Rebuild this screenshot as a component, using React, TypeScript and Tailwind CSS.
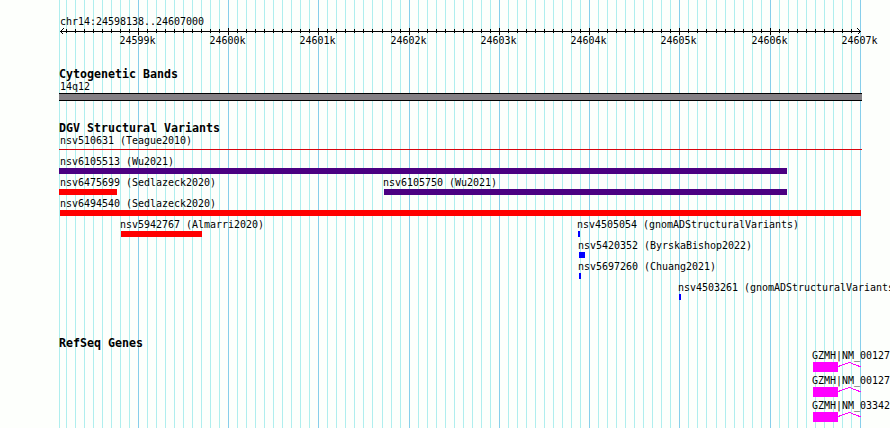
import React from 'react';

type Feature = { name: string; x: number; start: number; end: number; color: string };

const RED = 'bg-[#ff0000]';
const INDIGO = 'bg-[#4b0082]';
const BLUE = 'bg-[#0000ff]';

// One entry per packed row of the variants track
const variantRows: Feature[][] = [
  [{ name: 'nsv6105513 (Wu2021)', x: 60, start: 59, end: 787, color: INDIGO }],
  [
    { name: 'nsv6475699 (Sedlazeck2020)', x: 60, start: 59, end: 117, color: RED },
    { name: 'nsv6105750 (Wu2021)', x: 383, start: 384, end: 787, color: INDIGO },
  ],
  [{ name: 'nsv6494540 (Sedlazeck2020)', x: 60, start: 60, end: 861, color: RED }],
  [
    { name: 'nsv5942767 (Almarri2020)', x: 120, start: 121, end: 202, color: RED },
    { name: 'nsv4505054 (gnomADStructuralVariants)', x: 577, start: 578, end: 580, color: BLUE },
  ],
  [{ name: 'nsv5420352 (ByrskaBishop2022)', x: 578, start: 579, end: 585, color: BLUE }],
  [{ name: 'nsv5697260 (Chuang2021)', x: 578, start: 579, end: 581, color: BLUE }],
  [{ name: 'nsv4503261 (gnomADStructuralVariants)', x: 678, start: 679, end: 681, color: BLUE }],
];

// Accessions run past the right edge of the panel
const genes = [
  { id: 'a', name: 'GZMH|NM_00127' },
  { id: 'b', name: 'GZMH|NM_00127' },
  { id: 'c', name: 'GZMH|NM_03342' },
];

const scaleLabels = ['24599k', '24600k', '24601k', '24602k', '24603k', '24604k', '24605k', '24606k', '24607k'];

// 100 bp ticks, every tenth one is a 1 kb tick
const ticks = Array.from({ length: 89 }, (_, i) => ({
  x: Math.floor(66.05 + i * 9.0272),
  major: i % 10 === 8,
}));
const majorTicks = ticks.filter((t) => t.major);

const Grid = () => (
  <svg className="absolute inset-0" width="890" height="428" shapeRendering="crispEdges">
    <rect x="59" y="0" width="1" height="428" fill="#afeeee" />
    {ticks.map((t) => (
      <rect key={t.x} x={t.x} y="0" width="1" height="428" fill={t.major ? '#87ceeb' : '#afeeee'} />
    ))}
  </svg>
);

const Ruler = () => (
  <svg className="block" width="890" height="7" shapeRendering="crispEdges">
    <rect x="60" y="3" width="801" height="1" />
    {ticks.slice(0, -1).map((t) => (
      <rect key={t.x} x={t.x} y={t.major ? 0 : 1} width="1" height={t.major ? 7 : 4} />
    ))}
    <path d="M63.5 0.5L60.5 3.5L63.5 6.5M857.5 0.5L860.5 3.5L857.5 6.5" fill="none" stroke="#000" />
  </svg>
);

const TrackTitle = ({ children }: { children: React.ReactNode }) => (
  <h2 className="ml-[59px] h-[13px] text-[11.63px] leading-[13px] font-bold">{children}</h2>
);

const Variant = ({ name, x, start, end, color }: Feature) => (
  <div className="col-start-1 row-start-1">
    <div className="h-3" style={{ marginLeft: x }}>{name}</div>
    <div className={`h-1.5 ${color}`} style={{ marginLeft: start, width: end - start }} />
  </div>
);

const Gene = ({ name }: { name: string }) => (
  <div className="h-[25px] pl-[812px]">
    <div className="h-3">{name}</div>
    <div className="ml-px flex">
      <div className="h-2.5 w-[25px] bg-[#ff00ff]" />
      <svg width="24" height="10" shapeRendering="crispEdges">
        <path d="M0 4.5L11.5 0.5L23 5" fill="none" stroke="#ff00ff" />
      </svg>
    </div>
  </div>
);

const App = () => {
  return (
    <div className="relative h-[428px] w-[890px] overflow-hidden bg-[#fdfffc] font-['DejaVu_Sans_Mono',monospace] text-[9.97px] leading-3 whitespace-pre text-black">
      <Grid />
      <main className="relative flex flex-col pt-4">
        {/* Position and scale */}
        <header className="h-[52px]">
          <div className="ml-[60px] h-3">chr14:24598138..24607000</div>
          <Ruler />
          <div className="grid h-3">
            {scaleLabels.map((label, i) => (
              <span key={label} className="col-start-1 row-start-1" style={{ marginLeft: majorTicks[i].x - 18.5 }}>
                {label}
              </span>
            ))}
          </div>
        </header>

        {/* Cytogenetic bands */}
        <section className="h-[54px]">
          <TrackTitle>Cytogenetic Bands</TrackTitle>
          <div className="ml-[60px] h-3">14q12</div>
          <div className="ml-[59px] h-2 w-[803px] border-y border-black bg-[#848084]" />
        </section>

        {/* Structural variants */}
        <section className="h-[215px]">
          <TrackTitle>DGV Structural Variants</TrackTitle>
          <div className="ml-[60px] h-3">nsv510631 (Teague2010)</div>
          <div className="mt-0.5 mb-1.5 ml-[59px] h-px w-[803px] bg-[#d9040c]" />
          {variantRows.map((row) => (
            <div key={row[0].name} className="grid h-[21px] content-start">
              {row.map((feature) => (
                <Variant key={feature.name} {...feature} />
              ))}
            </div>
          ))}
        </section>

        {/* Genes */}
        <section>
          <TrackTitle>RefSeq Genes</TrackTitle>
          {genes.map((gene) => (
            <Gene key={gene.id} name={gene.name} />
          ))}
        </section>
      </main>
    </div>
  );
};

export default App;
